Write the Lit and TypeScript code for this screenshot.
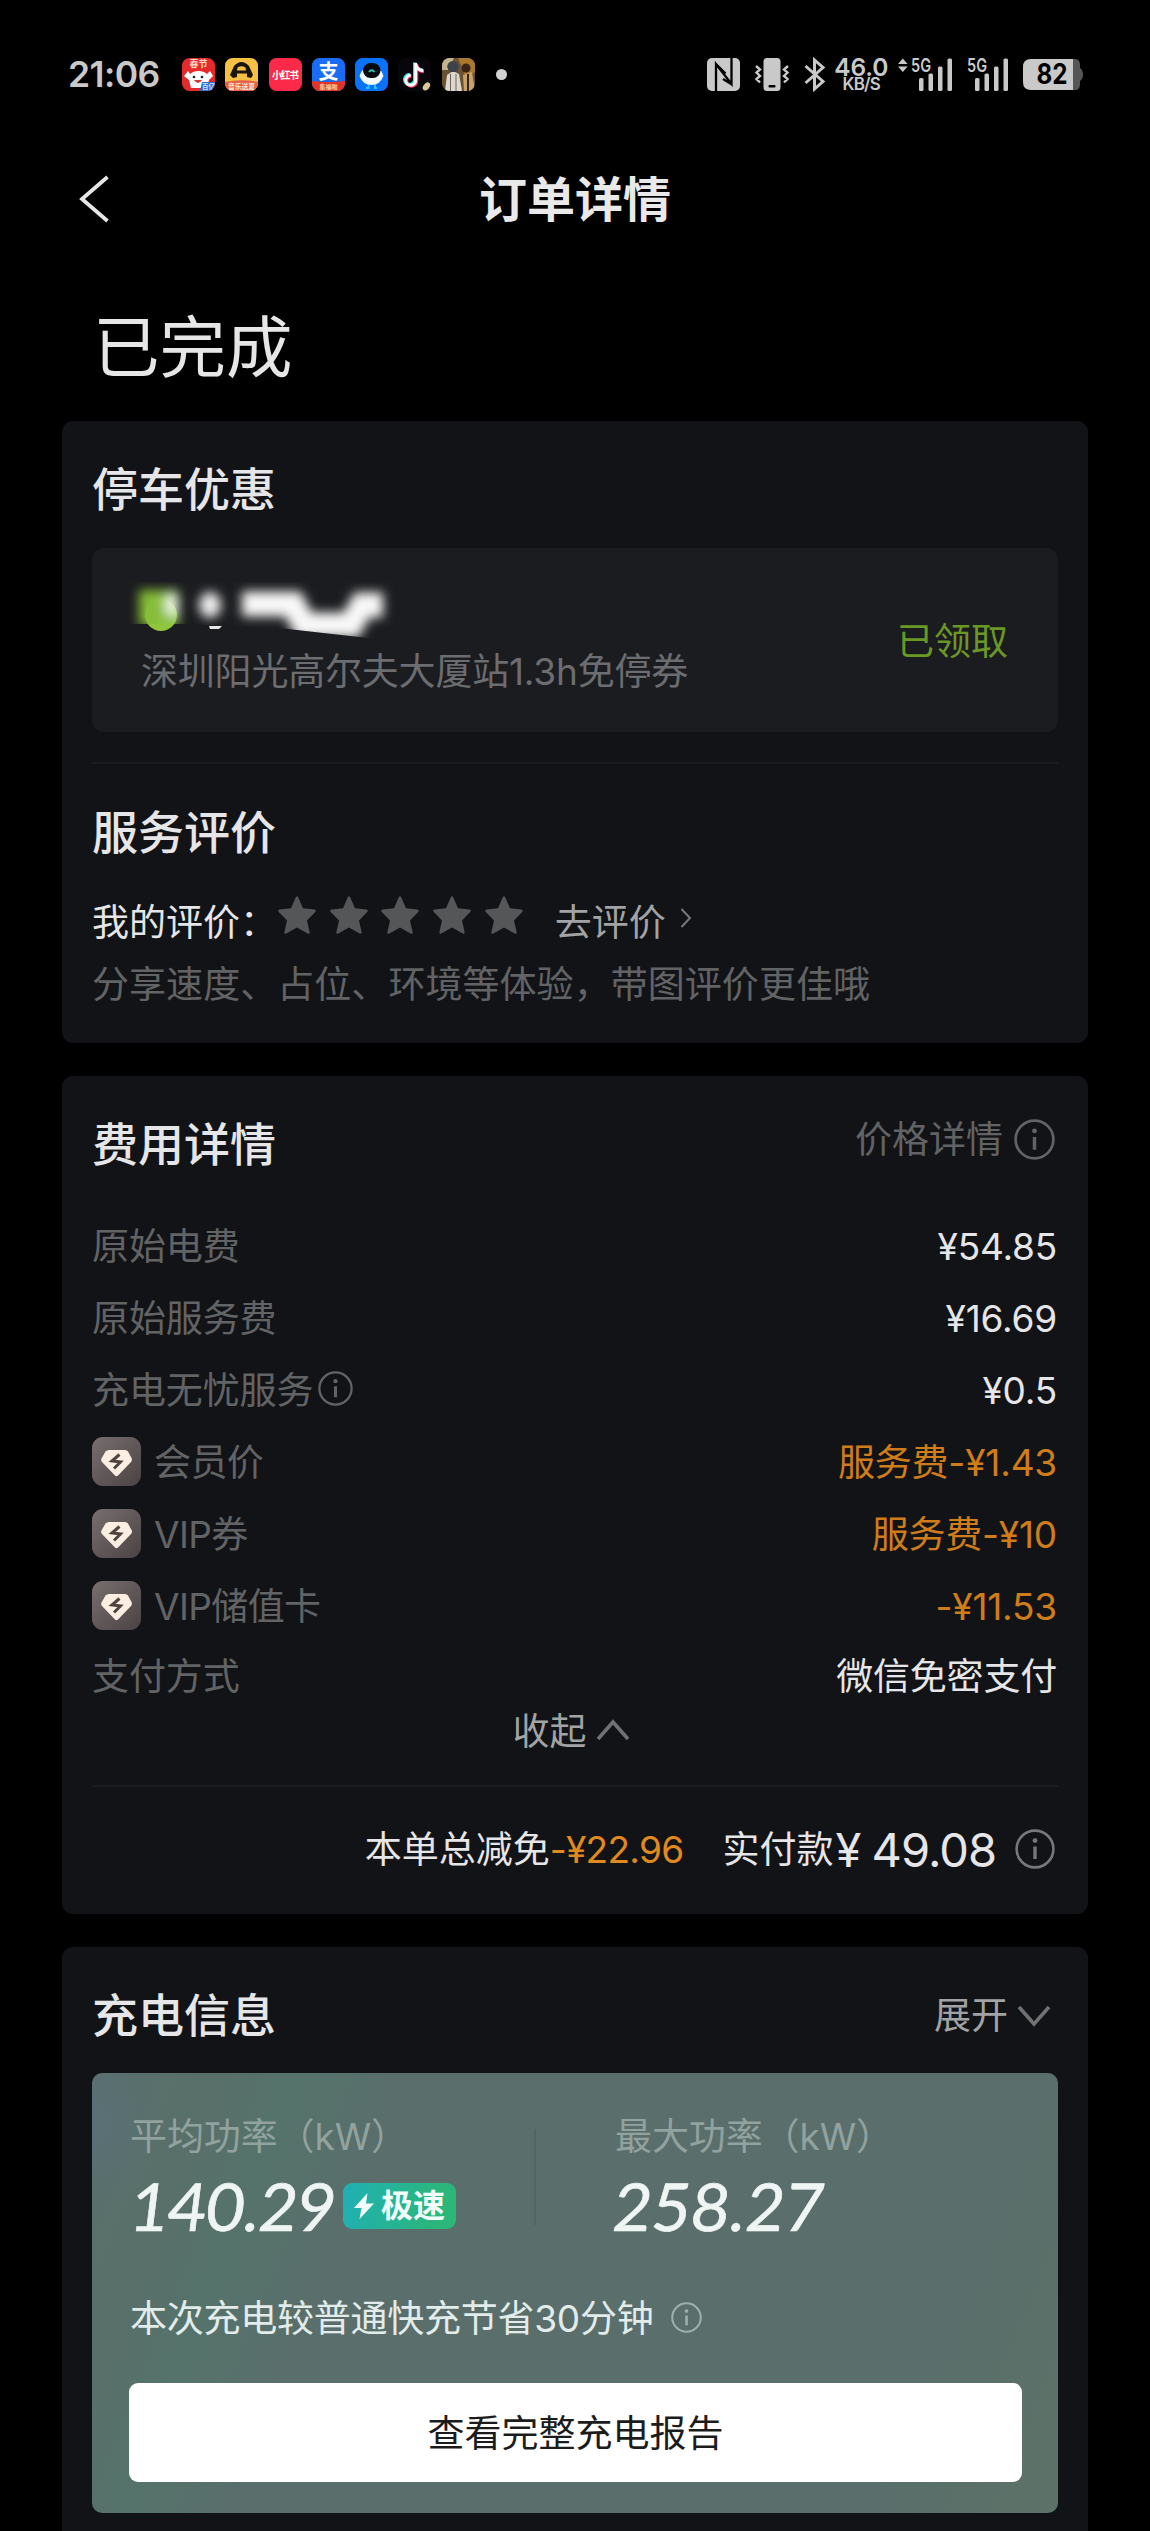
import { LitElement, html, svg, css, nothing } from "lit";
import { customElement, property } from "lit/decorators.js";

const chevron = (w: number, h: number, points: string, stroke: number) => html`
  <svg width=${w} height=${h} viewBox="0 0 ${w} ${h}" fill="none" stroke="currentColor" stroke-width=${stroke}>
    <polyline points=${points}></polyline>
  </svg>`;

const infoIcon = (size: number) => html`
  <svg width=${size} height=${size} viewBox="0 0 40 40" fill="none" stroke="currentColor">
    <circle cx="20" cy="20" r="18.4" stroke-width="2.6"></circle>
    <path d="M20 17.5V30" stroke-width="3.4"></path>
    <circle cx="20" cy="11.6" r="2.4" fill="currentColor" stroke="none"></circle>
  </svg>`;

@customElement("status-bar")
export class StatusBar extends LitElement {
  static styles = css`
    :host { display: flex; align-items: center; height: 67px; padding: 41px 0 0 68px; color: #c9c9c9;
      font-family: Inter, "Noto Sans CJK SC", sans-serif; }
    svg { display: block; flex: none; overflow: visible; }
    .time { width: 114px; font-size: 35.5px; font-weight: 600; letter-spacing: -0.6px; line-height: 40px; white-space: nowrap; }
    .apps { display: flex; gap: 10.3px; }
    .dot { width: 11px; height: 11px; border-radius: 50%; background: #d2d2d2; margin-left: 21px; }
    .spacer { width: 200px; }
    .system { display: flex; align-items: center; }
    .speed { width: 55px; margin-left: 9px; text-align: center; font-weight: 600; white-space: nowrap; }
    .rate { font-size: 24.5px; line-height: 20px; letter-spacing: -0.1px; }
    .unit { font-size: 17px; line-height: 15px; letter-spacing: -0.8px; }
    .vibrate { margin-left: 15px; }
    .bt { margin-left: 15px; }
    .sig1 { margin-left: 9px; }
    .sig2 { margin-left: 15px; }
    .battery { margin-left: 15px; }
  `;

  private app(body: unknown) {
    return html`<svg width="33" height="33" viewBox="0 0 33 33">
      <defs><clipPath id="r"><rect width="33" height="33" rx="7.5"></rect></clipPath></defs>
      <g clip-path="url(#r)">${body}</g></svg>`;
  }

  private signal(cls: string, x: number, arrows: boolean) {
    return html`<svg class=${cls} width=${41 + x} height="33" viewBox="0 0 ${41 + x} 33" fill="currentColor">
      ${arrows ? svg`<path d="M0 6L4.8 0.5L9.6 6ZM0 8.5H9.6L4.8 14Z"></path>` : nothing}
      <text x=${x} y="13.5" font-size="18.5" font-weight="600" textLength="20" lengthAdjust="spacingAndGlyphs">5G</text>
      <rect x=${x + 8} y="20" width="4.5" height="13" rx="1.5"></rect>
      <rect x=${x + 17.5} y="15.5" width="4.5" height="17.5" rx="1.5"></rect>
      <rect x=${x + 27} y="8.5" width="4.5" height="24.5" rx="1.5"></rect>
      <rect x=${x + 36.5} y="0.5" width="4.5" height="32.5" rx="1.5"></rect>
    </svg>`;
  }

  render() {
    return html`
      <div class="time">21:06</div>
      <div class="apps">
        ${this.app(svg`<rect width="33" height="33" fill="#e32a2c"></rect>
          <text x="16.5" y="8.5" font-size="9" font-weight="700" fill="#ffd9c4" text-anchor="middle">春节</text>
          <path d="M2 18L6 13L8 16C12 12 21 12 25 16L28 13L31 18L27 22L25 30H9L7 22Z" fill="#fff"></path>
          <circle cx="12" cy="19" r="1.3" fill="#222"></circle><circle cx="20" cy="19" r="1.3" fill="#222"></circle>
          <path d="M12 22H20Q16 28 12 22Z" fill="#d8372f"></path>
          <path d="M20 24H33V33H18Z" fill="#2f6cc4"></path>
          <text x="26.5" y="31" font-size="6.5" font-weight="700" fill="#cfe3ff" text-anchor="middle">百亿</text>`)}
        ${this.app(svg`<rect width="33" height="33" fill="#f5c043"></rect>
          <path d="M5 17L9 8Q16.500 0 24 8L28 17L26 20L22 19V15.500H12V19L8 20ZM12.500 9.500L12 12.500H21L20.500 9.500Q16.500 7 12.500 9.500Z" fill="#191510" fill-rule="evenodd"></path>
          <path d="M0 24Q16.500 20.500 33 24V33H0Z" fill="#e6604a"></path>
          <text x="16.500" y="31" font-size="6.8" font-weight="700" fill="#ffe9d6" text-anchor="middle">音乐送夏</text>`)}
        ${this.app(svg`<rect width="33" height="33" fill="#fb2a48"></rect>
          <text x="16.500" y="20.500" font-size="10" font-weight="700" fill="#fff" text-anchor="middle" textLength="27">小红书</text>`)}
        ${this.app(svg`<rect width="33" height="33" fill="#1a6cf2"></rect>
          <text x="16.500" y="21" font-size="20" font-weight="700" fill="#fff" text-anchor="middle">支</text>
          <path d="M0 23Q16.500 25 33 23V33H0Z" fill="#e0342b"></path>
          <text x="16.500" y="31.300" font-size="6" font-weight="700" fill="#ffd9a0" text-anchor="middle">集福啦</text>`)}
        ${this.app(svg`<rect width="33" height="33" fill="#0a72fb"></rect>
          <path d="M4.500 18Q8 8 16.500 7Q25 8 28.500 18Q25 27 16.500 27Q8 27 4.500 18Z" fill="#f4fbff"></path>
          <rect x="8" y="5" width="17.500" height="15" rx="7.500" fill="#060b12"></rect>
          <path d="M14 14Q16.500 10.500 19.500 14" fill="none" stroke="#28d0b0" stroke-width="1.800"></path>
          <path d="M13.500 27V30H11M20 27V30H22" stroke="#29c7f0" stroke-width="2" fill="none"></path>`)}
        ${this.app(svg`<rect width="33" height="33" fill="#07060c"></rect>
          <g fill="none" stroke-width="3.600">
            <path d="M16.800 4.500V21.500A5 5 0 1 1 11.800 16.500M16.800 5Q18 11.500 24.500 12" stroke="#28e6e2"></path>
            <path d="M18.500 6V23A5 5 0 1 1 13.500 18M18.500 7Q20 13 26 13.500" stroke="#f5315f"></path>
            <path d="M17.700 5V22A5 5 0 1 1 12.700 17.200M17.700 6Q19 12.300 25.300 12.800" stroke="#fff" stroke-width="3"></path>
          </g>
          <ellipse cx="28.500" cy="28.500" rx="4.500" ry="3" fill="#d9c79c" transform="rotate(-50 28.500 28.500)"></ellipse>`)}
        ${this.app(svg`<rect width="33" height="33" fill="#6a5232"></rect>
          <path d="M0 0H12L6 12H0Z" fill="#c4b48c"></path><path d="M16 0H33V14L24 20Z" fill="#a9772e"></path>
          <circle cx="24" cy="10" r="4.500" fill="#3b2415"></circle>
          <path d="M3 33L5 17L11 13L17 16L20 33Z" fill="#ddd8cd"></path>
          <path d="M8.500 16V33M14 16V33" stroke="#6b665f" stroke-width="1"></path>
          <path d="M5 9Q6 3 11 3Q16 3 17 9L15 14H8Z" fill="#3c444b"></path>
          <path d="M21 17L30 14L33 33H22Z" fill="#c9a26a"></path><path d="M26 16V33" stroke="#31251a" stroke-width="2"></path>`)}
      </div>
      <div class="dot"></div>
      <div class="spacer"></div>
      <div class="system">
        <svg class="nfc" width="33" height="33" viewBox="0 0 33 33">
          <rect width="33" height="33" rx="5" fill="currentColor"></rect>
          <path d="M9 33V6L24.500 26V0M9 6L18.500 15.500M25 26.500L16 21" fill="none" stroke="#000" stroke-width="2.300"></path>
        </svg>
        <svg class="vibrate" width="34" height="33" viewBox="0 0 34 33">
          <rect x="8.500" width="17" height="33" rx="3.500" fill="currentColor"></rect>
          <rect x="13.500" y="27" width="7" height="2.400" rx="1" fill="#000"></rect>
          <path d="M1 8L5 11.500L1.500 14.500L5 18L1.500 21L5 24.500M33 8L29 11.500L32.500 14.500L29 18L32.500 21L29 24.500" fill="none" stroke="currentColor" stroke-width="2.400"></path>
        </svg>
        <svg class="bt" width="21" height="33" viewBox="0 0 21 33">
          <path d="M1.500 8L19 23.500L10.500 31V2L19 9.500L1.500 25" fill="none" stroke="currentColor" stroke-width="3"></path>
        </svg>
        <div class="speed"><div class="rate">46.0</div><div class="unit">KB/S</div></div>
        ${this.signal("sig1", 13, true)}
        ${this.signal("sig2", 0, false)}
        <svg class="battery" width="60" height="33" viewBox="0 0 60 33">
          <path d="M50 1H52Q57 1 57 7V10Q60 12 60 16.500Q60 21 57 23V26Q57 32 52 32H50Z" fill="#565656"></path>
          <path d="M8 1H50V32H8Q0 32 0 24V9Q0 1 8 1Z" fill="currentColor"></path>
          <text x="29" y="26" font-size="28" font-weight="700" fill="#000" text-anchor="middle" textLength="31" lengthAdjust="spacingAndGlyphs">82</text>
        </svg>
      </div>`;
  }
}

@customElement("bill-row")
export class BillRow extends LitElement {
  @property() label = "";
  @property() value = "";
  @property({ type: Boolean }) vip = false;
  @property({ type: Boolean }) info = false;
  @property({ type: Boolean }) discount = false;

  static styles = css`
    :host { display: flex; align-items: center; height: 72px; font-size: 37px; line-height: 44px; color: #626365; }
    svg { display: block; flex: none; }
    .badge { width: 49px; height: 49px; margin-right: 13px; margin-bottom: 1px; }
    .info { margin-left: 5px; margin-top: -3px; }
    .label { letter-spacing: -0.1px; white-space: nowrap; padding-top: 2px; }
    .vip-label { letter-spacing: -0.6px; }
    .value { margin-left: auto; margin-right: 1px; color: #e6e6e8; letter-spacing: -0.2px; white-space: nowrap; padding-top: 2px; }
    .discount { color: #cf7d1b; }
  `;

  render() {
    return html`
      ${this.vip
        ? html`<svg class="badge" viewBox="0 0 49 49">
            <defs><linearGradient id="g" x1="0" y1="0" x2="1" y2="1">
              <stop offset="0" stop-color="#77706f"></stop><stop offset="1" stop-color="#4b4243"></stop>
            </linearGradient></defs>
            <rect width="49" height="49" rx="11" fill="url(#g)"></rect>
            <path d="M17 13H33Q35 13 36 14.500L39.800 21.500Q40.500 23.500 39 25L26 38.500Q24.500 40 23 38.500L10 25Q8.500 23.500 9.500 21.500L13.500 14.500Q15 13 17 13Z" fill="#fdeee2"></path>
            <path d="M27.500 17.500L20 24L28.500 25L22 31.500" fill="none" stroke="#4f4442" stroke-width="3"></path>
          </svg>`
        : nothing}
      <span class="label ${this.vip ? "vip-label" : ""}">${this.label}</span>
      ${this.info ? html`<span class="info">${infoIcon(35)}</span>` : nothing}
      <span class="value ${this.discount ? "discount" : ""}">${this.value}</span>`;
  }
}

@customElement("app-root")
export class AppRoot extends LitElement {
  static styles = css`
    :host { display: block; width: 1150px; height: 2531px; overflow: hidden; background: #000; color: #e6e6e8;
      font-family: Inter, "Noto Sans CJK SC", sans-serif; font-size: 37px; line-height: 44px; }
    svg { display: block; flex: none; }
    .nav { display: grid; grid-template-columns: 1fr auto 1fr; align-items: center; height: 184px; padding: 0 79px; }
    .back { margin-bottom: 3px; }
    .nav-title { font-size: 48px; font-weight: 700; line-height: 60px; color: #e9e9e9; }
    .state { margin: 11px 0 28px 93px; font-size: 66.5px; line-height: 90px; font-weight: 400; color: #e6e6e6; }
    .card { margin: 0 62px; padding: 0 30px; background: #121316; border-radius: 11px; }
    .parking { height: 622px; padding-top: 38px; box-sizing: border-box; }
    .cost { height: 838px; padding-top: 38px; box-sizing: border-box; margin-top: 33px; }
    .charge { height: 650px; padding-top: 38px; box-sizing: border-box; margin-top: 33px; }
    .title { font-size: 46px; line-height: 60px; font-weight: 500; }
    .head { display: flex; justify-content: space-between; }
    .coupon { display: flex; align-items: center; justify-content: space-between; height: 184px; margin-top: 29px;
      padding: 0 50px 0 43px; box-sizing: border-box; background: #1b1c1f; border-radius: 12px; }
    .coupon-text { padding: 0 0 4px 6px; color: #6c6d70; letter-spacing: -0.2px; }
    .redacted { margin-left: -7px; margin-bottom: 12px; }
    .claimed { color: #6a9826; padding-top: 4px; }
    .rule { height: 2px; background: #1b1c1f; }
    .rule-coupon { margin: 30px 0 38px; }
    .rating { display: flex; align-items: center; height: 50px; margin-top: 36px; }
    .stars { display: flex; gap: 13.700px; margin: 0 0 17px -1px; color: #555657; }
    .rating-label { width: 187px; white-space: nowrap; }
    .go { margin-left: 32px; color: #a2a3a5; }
    .go-arrow { margin: 0 0 10px 14px; color: #77787a; }
    .hint { margin-top: 15px; color: #626365; white-space: nowrap; letter-spacing: 0.05px; }
    .price-link { display: flex; align-items: center; gap: 11px; height: 45px; margin-top: 3px; padding-right: 3px; color: #626365; }
    .rows { margin-top: 36px; }
    .last { height: 68px; }
    .fold { display: flex; align-items: center; justify-content: center; gap: 9px; height: 44px; color: #a2a3a5;
      padding-right: 8px; }
    .fold-arrow { color: #707173; margin-bottom: 4px; }
    .open-arrow { color: #707173; }
    .rule-total { margin-top: 31px; }
    .total { display: flex; align-items: center; justify-content: flex-end; height: 126px; padding-right: 3px; white-space: nowrap; }
    .off { color: #e08a1e; letter-spacing: -0.700px; margin-right: 39px; }
    .paid { font-size: 47px; letter-spacing: -1px; margin: 0 19px 0 2px; word-spacing: -1px; }
    .total-info { color: #77787a; margin-bottom: 3px; }
    .expand { display: flex; align-items: center; gap: 9px; height: 62px; margin-bottom: -2px; padding-right: 7px; color: #a2a3a5; }
    .panel { height: 440px; margin-top: 28px; padding: 42px 36px 0 37px; box-sizing: border-box; border-radius: 10px;
      background: radial-gradient(ellipse 70px 90px at 0 50px, rgba(90, 112, 122, 0.7), transparent),
        linear-gradient(112deg, #5a6f6d 0%, #587069 12%, #55736b 18%, #5a6e6b 28%, #5a6e6b 84%, #5d7267 100%); }
    .stats { display: grid; grid-template-columns: 405px 80px 1fr; }
    .stat-rule { width: 2px; height: 96px; margin: 14px 0 0; background: #526563; }
    .stat-label { color: #91a29f; padding-left: 1px; white-space: nowrap; letter-spacing: -0.1px; }
    .stat-value { display: flex; align-items: center; height: 60px; margin-top: 17px; font-family: Lato, sans-serif;
      font-size: 66px; color: #eef5f3; line-height: 60px; }
    .figure { display: block; transform: skewX(-7deg); letter-spacing: 0.6px; -webkit-text-stroke: 0.7px #eef5f3; }
    .figure-average { width: 205px; margin-left: 2px; letter-spacing: -0.4px; }
    .fast { display: flex; align-items: center; gap: 7px; width: 113px; height: 46px; padding-left: 11px; margin-left: 7px;
      box-sizing: border-box; border-radius: 9px; background: linear-gradient(100deg, #20b0b4, #2cb679 85%); color: #f2fffb;
      font: 600 32px/44px Inter, "Noto Sans CJK SC", sans-serif; }
    .saved { display: flex; align-items: center; gap: 18px; margin: 61px 0 42px 1px; color: #e2ecea; letter-spacing: -0.25px; }
    .saved-info { color: #9fb0ac; margin-bottom: 3px; }
    .report { display: flex; align-items: center; justify-content: center; width: 100%; height: 99px; border: 0; padding: 3px 0 0 0;
      border-radius: 9px; background: #fff; color: #1c1c1c; font: inherit; }
  `;

  private star = html`<svg width="38" height="38" viewBox="0 0 38 38" fill="currentColor">
    <path d="M17.800 1.200Q19 -0.800 20.200 1.200L25 12.300L36.500 13.600Q38.800 14.200 37.200 16L29 24.500L31.600 36Q31.800 38.500 29.600 37.400L19 31.500L8.400 37.400Q6.200 38.500 6.400 36L9 24.500L0.800 16Q-0.800 14.200 1.500 13.600L13 12.300Z"></path></svg>`;

  render() {
    return html`
      <status-bar></status-bar>
      <div class="nav">
        <div class="back">${chevron(30, 48, "28.500,2 3,24 28.500,46", 3.8)}</div>
        <div class="nav-title">订单详情</div>
      </div>
      <div class="state">已完成</div>

      <section class="card parking">
        <div class="title">停车优惠</div>
        <div class="coupon">
          <div>
            <svg class="redacted" width="270" height="56" viewBox="130 580 270 56">
              <defs>
                <filter id="b" x="-30%" y="-60%" width="160%" height="220%"><feGaussianBlur stdDeviation="5.500"></feGaussianBlur></filter>
                <clipPath id="c"><path d="M130 580H400V636H370L290 627L190 622H130Z"></path></clipPath>
              </defs>
              <circle cx="163" cy="613" r="16" fill="#8fc63d"></circle>
              <g clip-path="url(#c)"><g filter="url(#b)">
                <rect x="141" y="588" width="40" height="36" fill="#86bd38"></rect>
                <ellipse cx="174" cy="603" rx="7" ry="12" fill="#eef6e4"></ellipse>
                <ellipse cx="212" cy="603" rx="11" ry="13" fill="#eee"></ellipse>
                <path d="M244 602H295L306 623H353L364 603H385" fill="none" stroke="#f8f8f8" stroke-width="25"></path>
              </g></g>
              <path d="M211 624H224L221 627H212Z" fill="#e8e8e8"></path>
            </svg>
            <div class="coupon-text">深圳阳光高尔夫大厦站1.3h免停券</div>
          </div>
          <span class="claimed">已领取</span>
        </div>
        <div class="rule rule-coupon"></div>
        <div class="title">服务评价</div>
        <div class="rating">
          <span class="rating-label">我的评价：</span>
          <div class="stars">${[0, 1, 2, 3, 4].map(() => this.star)}</div>
          <span class="go">去评价</span>
          <span class="go-arrow">${chevron(12, 20, "1.500,1 10,10 1.500,19", 2)}</span>
        </div>
        <div class="hint">分享速度、占位、环境等体验，带图评价更佳哦</div>
      </section>

      <section class="card cost">
        <div class="head">
          <div class="title">费用详情</div>
          <div class="price-link"><span>价格详情</span>${infoIcon(41)}</div>
        </div>
        <div class="rows">
          <bill-row label="原始电费" value="¥54.85"></bill-row>
          <bill-row label="原始服务费" value="¥16.69"></bill-row>
          <bill-row label="充电无忧服务" value="¥0.5" info></bill-row>
          <bill-row label="会员价" value="服务费-¥1.43" vip discount></bill-row>
          <bill-row label="VIP券" value="服务费-¥10" vip discount></bill-row>
          <bill-row label="VIP储值卡" value="-¥11.53" vip discount></bill-row>
          <bill-row class="last" label="支付方式" value="微信免密支付"></bill-row>
        </div>
        <div class="fold"><span>收起</span><span class="fold-arrow">${chevron(34, 24, "2,21 17,4 32,21", 3.6)}</span></div>
        <div class="rule rule-total"></div>
        <div class="total">
          <span>本单总减免</span><span class="off">-¥22.96</span>
          <span>实付款</span><span class="paid">¥ 49.08</span>
          <span class="total-info">${infoIcon(40)}</span>
        </div>
      </section>

      <section class="card charge">
        <div class="head">
          <div class="title">充电信息</div>
          <div class="expand"><span>展开</span><span class="open-arrow">${chevron(34, 24, "2,3 17,20 32,3", 3.6)}</span></div>
        </div>
        <div class="panel">
          <div class="stats">
            <div>
              <div class="stat-label">平均功率（kW）</div>
              <div class="stat-value"><span class="figure figure-average">140.29</span>
                <span class="fast"><svg width="20" height="26" viewBox="0 0 20 26" fill="currentColor"><path d="M13.500 0L0 15H7.500L5.500 26L20 10.500H12Z"></path></svg>极速</span>
              </div>
            </div>
            <div class="stat-rule"></div>
            <div>
              <div class="stat-label">最大功率（kW）</div>
              <div class="stat-value"><span class="figure">258.27</span></div>
            </div>
          </div>
          <div class="saved"><span>本次充电较普通快充节省30分钟</span><span class="saved-info">${infoIcon(31)}</span></div>
          <button class="report">查看完整充电报告</button>
        </div>
      </section>`;
  }
}
